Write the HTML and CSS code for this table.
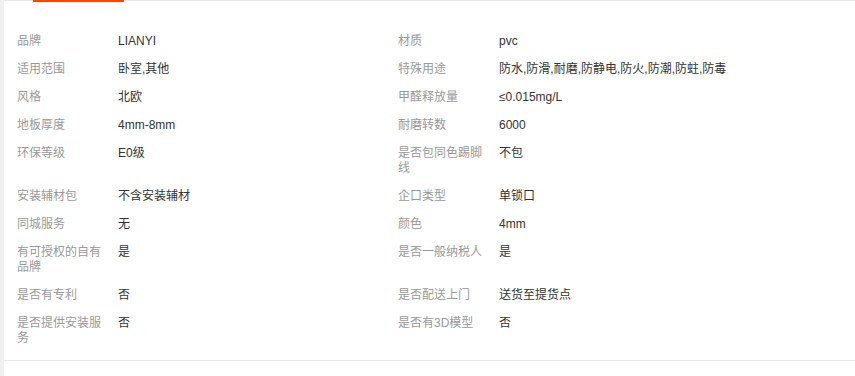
FILE: index.html
```html
<!DOCTYPE html>
<html>
<head>
	<title>商品参数</title>
	<meta charset="utf-8" />
	<link rel="stylesheet" href="styles.css">
</head>
<body>
	<div class="panel">
		<div class="tab-head">
			<div class="tab-active"></div>
		</div>
		<ul class="params">
			<li><span class="name">品牌</span><span class="value">LIANYI</span></li>
			<li><span class="name">材质</span><span class="value">pvc</span></li>
			<li><span class="name">适用范围</span><span class="value">卧室,其他</span></li>
			<li><span class="name">特殊用途</span><span class="value">防水,防滑,耐磨,防静电,防火,防潮,防蛀,防毒</span></li>
			<li><span class="name">风格</span><span class="value">北欧</span></li>
			<li><span class="name">甲醛释放量</span><span class="value">≤0.015mg/L</span></li>
			<li><span class="name">地板厚度</span><span class="value">4mm-8mm</span></li>
			<li><span class="name">耐磨转数</span><span class="value">6000</span></li>
			<li><span class="name">环保等级</span><span class="value">E0级</span></li>
			<li><span class="name">是否包同色踢脚线</span><span class="value">不包</span></li>
			<li><span class="name">安装辅材包</span><span class="value">不含安装辅材</span></li>
			<li><span class="name">企口类型</span><span class="value">单锁口</span></li>
			<li><span class="name">同城服务</span><span class="value">无</span></li>
			<li><span class="name">颜色</span><span class="value">4mm</span></li>
			<li><span class="name">有可授权的自有品牌</span><span class="value">是</span></li>
			<li><span class="name">是否一般纳税人</span><span class="value">是</span></li>
			<li><span class="name">是否有专利</span><span class="value">否</span></li>
			<li><span class="name">是否配送上门</span><span class="value">送货至提货点</span></li>
			<li><span class="name">是否提供安装服务</span><span class="value">否</span></li>
			<li><span class="name">是否有3D模型</span><span class="value">否</span></li>
		</ul>
	</div>
</body>
</html>
```

FILE: styles.css
```css
html, body {
	margin: 0;
	padding: 0;
}

body {
	background-color: #f0f0f0;
	font-family: "Liberation Sans", "Noto Sans CJK SC", sans-serif;
	font-size: 12px;
	color: #333;
}

.panel {
	margin-left: 4px;
	min-height: 100vh;
	background-color: #fff;
}

	.panel .tab-head {
		height: 1px;
		background-color: #e8e8e8;
	}

	.panel .tab-active {
		width: 91px;
		height: 2px;
		margin-left: 29px;
		background-color: #ff4400;
	}

.params {
	display: grid;
	grid-template-columns: 381px 381px;
	margin: 0;
	padding: 33px 0 1px 13px;
	list-style: none;
	border-bottom: 1px solid #e8e8e8;
}

	.params li {
		display: flex;
		padding-bottom: 13px;
		line-height: 15px;
	}

	.params .name {
		flex: none;
		width: 88px;
		margin-right: 13px;
		color: #999;
	}

	.params .value {
		color: #333;
	}
```
